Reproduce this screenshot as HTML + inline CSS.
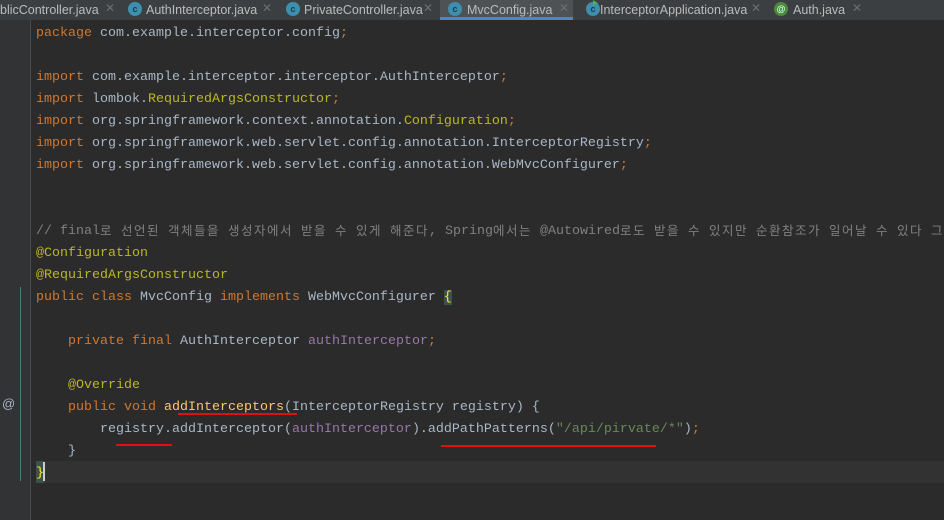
<!DOCTYPE html>
<html><head><meta charset="utf-8"><style>
body{margin:0;width:944px;height:520px;background:#2b2b2b;overflow:hidden;position:relative;font-family:"Liberation Mono","Noto Sans CJK KR",monospace;}
#tabs{position:absolute;left:0;top:0;width:944px;height:20px;background:#3c3f41;font-family:"Liberation Sans",sans-serif;font-size:12.5px;color:#bbbbbb;}
.tab{position:absolute;top:1px;height:19px;line-height:18px;white-space:nowrap}
.ic{position:absolute;top:2px;width:14px;height:14px;border-radius:50%;background:#3d8fb0;color:#1c3a48;font-size:9px;line-height:14px;text-align:center;font-weight:bold}
.x{position:absolute;top:1px;color:#6e6e6e;font-size:12px}
#gut{position:absolute;left:0;top:20px;width:30px;height:500px;background:#313335;border-right:1px solid #4a4a4a}
#fold{position:absolute;left:20px;top:287px;width:1px;height:194px;background:#4f7a78}
#cur{position:absolute;left:36px;top:461px;width:908px;height:22px;background:#323232}
#code{position:absolute;left:36px;top:23px;font-size:13.33px;line-height:22px;color:#a9b7c6;white-space:pre}
.k{color:#cc7832}.a{color:#bbb529}.c{color:#808080}.f{color:#9876aa}.s{color:#6a8759}.m{color:#ffc66d}
.h{display:inline-block;width:13px;height:22px;text-align:left;font-size:12.5px;overflow:hidden;vertical-align:top}
.red{position:absolute;height:2px;background:#e01010}
</style></head><body>
<div id="tabs">
<div class="tab" style="left:0">blicController.java</div><div class="x" style="left:105px">✕</div>
<div class="ic" style="left:128px">c</div><div class="tab" style="left:146px">AuthInterceptor.java</div><div class="x" style="left:262px">✕</div>
<div class="ic" style="left:286px">c</div><div class="tab" style="left:304px">PrivateController.java</div><div class="x" style="left:423px">✕</div>
<div style="position:absolute;left:440px;top:0;width:133px;height:17px;background:#4e5254;border-bottom:3px solid #4a88c7"></div>
<div class="ic" style="left:448px">c</div><div class="tab" style="left:467px">MvcConfig.java</div><div class="x" style="left:559px">✕</div>
<div class="ic" style="left:586px">c</div><div style="position:absolute;left:593px;top:0;width:0;height:0;border-left:5px solid #4caf50;border-top:3px solid transparent;border-bottom:3px solid transparent"></div><div class="tab" style="left:600px">InterceptorApplication.java</div><div class="x" style="left:751px">✕</div>
<div class="ic" style="left:774px;background:#4c8a3a;color:#cfe">@</div><div class="tab" style="left:793px">Auth.java</div><div class="x" style="left:852px">✕</div>
</div>
<div id="gut"></div>
<div id="fold"></div>
<div style="position:absolute;left:2px;top:396px;color:#a9b7c6;font-size:13px;font-family:'Liberation Sans',sans-serif">@</div>
<div id="cur"></div>
<div style="position:absolute;left:36px;top:461px;width:8px;height:22px;background:#3b514d"></div>
<div style="position:absolute;left:43px;top:462px;width:2px;height:19px;background:#ccc"></div>
<div id="code"><span class="k">package</span> com.example.interceptor.config<span class="k">;</span>

<span class="k">import</span> com.example.interceptor.interceptor.AuthInterceptor<span class="k">;</span>
<span class="k">import</span> lombok.<span class="a">RequiredArgsConstructor</span><span class="k">;</span>
<span class="k">import</span> org.springframework.context.annotation.<span class="a">Configuration</span><span class="k">;</span>
<span class="k">import</span> org.springframework.web.servlet.config.annotation.InterceptorRegistry<span class="k">;</span>
<span class="k">import</span> org.springframework.web.servlet.config.annotation.WebMvcConfigurer<span class="k">;</span>


<span class="c">// final<span class="h">로</span> <span class="h">선</span><span class="h">언</span><span class="h">된</span> <span class="h">객</span><span class="h">체</span><span class="h">들</span><span class="h">을</span> <span class="h">생</span><span class="h">성</span><span class="h">자</span><span class="h">에</span><span class="h">서</span> <span class="h">받</span><span class="h">을</span> <span class="h">수</span> <span class="h">있</span><span class="h">게</span> <span class="h">해</span><span class="h">준</span><span class="h">다</span>, Spring<span class="h">에</span><span class="h">서</span><span class="h">는</span> @Autowired<span class="h">로</span><span class="h">도</span> <span class="h">받</span><span class="h">을</span> <span class="h">수</span> <span class="h">있</span><span class="h">지</span><span class="h">만</span> <span class="h">순</span><span class="h">환</span><span class="h">참</span><span class="h">조</span><span class="h">가</span> <span class="h">일</span><span class="h">어</span><span class="h">날</span> <span class="h">수</span> <span class="h">있</span><span class="h">다</span> <span class="h">그</span></span>
<span class="a">@Configuration</span>
<span class="a">@RequiredArgsConstructor</span>
<span class="k">public class</span> MvcConfig <span class="k">implements</span> WebMvcConfigurer <span style="color:#ffef28;background:#3b514d">{</span>

    <span class="k">private final</span> AuthInterceptor <span class="f">authInterceptor</span><span class="k">;</span>

    <span class="a">@Override</span>
    <span class="k">public void</span> <span class="m">addInterceptors</span>(InterceptorRegistry registry) {
        registry.addInterceptor(<span class="f">authInterceptor</span>).addPathPatterns(<span class="s">"/api/pirvate/*"</span>)<span class="k">;</span>
    }
<span style="color:#ffef28">}</span></div>
<div class="red" style="left:178px;top:413px;width:119px"></div>
<div class="red" style="left:116px;top:444px;width:56px"></div>
<div class="red" style="left:441px;top:445px;width:215px"></div>
</body></html>
